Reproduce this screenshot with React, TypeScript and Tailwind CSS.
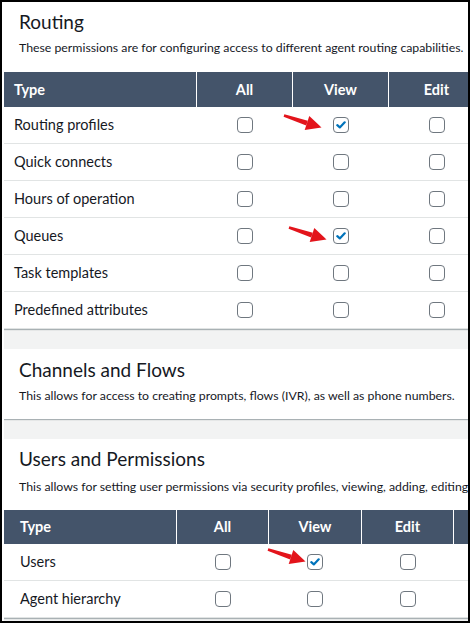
import React from 'react';

type Row = { name: string; checked?: 'all' | 'view' | 'edit' };

const routingRows: Row[] = [
  { name: 'Routing profiles', checked: 'view' },
  { name: 'Quick connects' },
  { name: 'Hours of operation' },
  { name: 'Queues', checked: 'view' },
  { name: 'Task templates' },
  { name: 'Predefined attributes' },
];

const userRows: Row[] = [
  { name: 'Users', checked: 'view' },
  { name: 'Agent hierarchy' },
];

const font = { fontFamily: 'Lato, "Liberation Sans", sans-serif' };

const Checkbox = ({ checked }: { checked?: boolean }) => (
  <span className="flex h-4 w-4 items-center justify-center rounded-[4px] border-[1.5px] border-[#6f777f] bg-white">
    {checked && (
      <svg width="10" height="8" viewBox="0 0 10 8">
        <path d="M1.3 4.2 L3.8 6.4 L8.7 1.3" fill="none" stroke="#0073bb" strokeWidth="2.2" strokeLinecap="round" strokeLinejoin="round" />
      </svg>
    )}
  </span>
);

const RedArrow = ({ className }: { className: string }) => (
  <svg className={`pointer-events-none absolute ${className}`} width="40" height="19" viewBox="0 0 40 19">
    <polygon points="1.4,1.2 0.6,3.8 23.2,12.6 24.8,7.8" fill="#e3141b" />
    <polygon points="38.5,14.5 26.3,2.9 21.7,17.1" fill="#e3141b" />
  </svg>
);

const Card = ({ title, text, children, className = '', descClass = 'mt-[4px]' }: { title: string; text: string; children?: React.ReactNode; className?: string; descClass?: string }) => (
  <div className={`bg-white shadow-[0_1px_1px_0_rgba(0,28,36,0.3)] ${className}`}>
    <h2 className="h-6 whitespace-nowrap pl-[15px] text-[19px] leading-6 text-[#16191f]">{title}</h2>
    <p className={`whitespace-nowrap pl-[15px] text-[12.3px] leading-5 text-[#16191f] ${descClass}`}>{text}</p>
    {children}
  </div>
);

export default function App() {
  return (
    <div className="h-[623px] w-[470px] overflow-hidden border-2 border-black bg-white pl-[2px]" style={font}>
      <div className="h-full overflow-hidden bg-[#f2f3f3]">
        <Card title="Routing" text="These permissions are for configuring access to different agent routing capabilities." className="pt-2">
          <div className="relative mt-[14px] w-[600px]">
            <div className="grid h-[35px] grid-cols-[192px_96px_96px_96px_96px] bg-[#44546a] text-[14.5px] font-bold text-white">
              <div className="flex items-center pl-[10px]">Type</div>
              <div className="flex items-center justify-center border-l border-white">All</div>
              <div className="flex items-center justify-center border-l border-white">View</div>
              <div className="flex items-center justify-center border-l border-white">Edit</div>
              <div className="border-l border-white" />
            </div>
            {routingRows.map((r) => (
              <div key={r.name} className="grid h-[37px] grid-cols-[192px_96px_96px_96px_96px] border-b border-[#e1e4e4] text-[14.5px] text-[#16191f]">
                <div className="flex items-center pl-[10px]">{r.name}</div>
                <div className="flex items-center justify-center pl-px"><Checkbox checked={r.checked === 'all'} /></div>
                <div className="flex items-center justify-center pl-px"><Checkbox checked={r.checked === 'view'} /></div>
                <div className="flex items-center justify-center pl-px"><Checkbox checked={r.checked === 'edit'} /></div>
                <div />
              </div>
            ))}
            <RedArrow className="left-[279px] top-[41px]" />
            <RedArrow className="left-[284px] top-[153px]" />
          </div>
        </Card>

        <Card title="Channels and Flows" text="This allows for access to creating prompts, flows (IVR), as well as phone numbers." className="mt-5 pb-[13px] pt-[9px]" />

        <Card title="Users and Permissions" text="This allows for setting user permissions via security profiles, viewing, adding, editing and removing users." className="mt-5 pt-2" descClass="mt-[6px]">
          <div className="relative mt-[13px] w-[600px]">
            <div className="grid h-[34px] grid-cols-[172px_92px_93px_92px_92px] bg-[#44546a] text-[14.5px] font-bold text-white">
              <div className="flex items-center pl-4">Type</div>
              <div className="flex items-center justify-center border-l border-white">All</div>
              <div className="flex items-center justify-center border-l border-white">View</div>
              <div className="flex items-center justify-center border-l border-white">Edit</div>
              <div className="border-l border-white" />
            </div>
            {userRows.map((r) => (
              <div key={r.name} className="grid h-[37px] grid-cols-[172px_92px_93px_92px_92px] border-b border-[#e1e4e4] text-[14.5px] text-[#16191f]">
                <div className="flex items-center pl-4">{r.name}</div>
                <div className="flex items-center justify-center pl-px"><Checkbox checked={r.checked === 'all'} /></div>
                <div className="flex items-center justify-center pl-px"><Checkbox checked={r.checked === 'view'} /></div>
                <div className="flex items-center justify-center pl-px"><Checkbox checked={r.checked === 'edit'} /></div>
                <div />
              </div>
            ))}
            <RedArrow className="left-[263px] top-[37px]" />
          </div>
        </Card>
      </div>
    </div>
  );
}
